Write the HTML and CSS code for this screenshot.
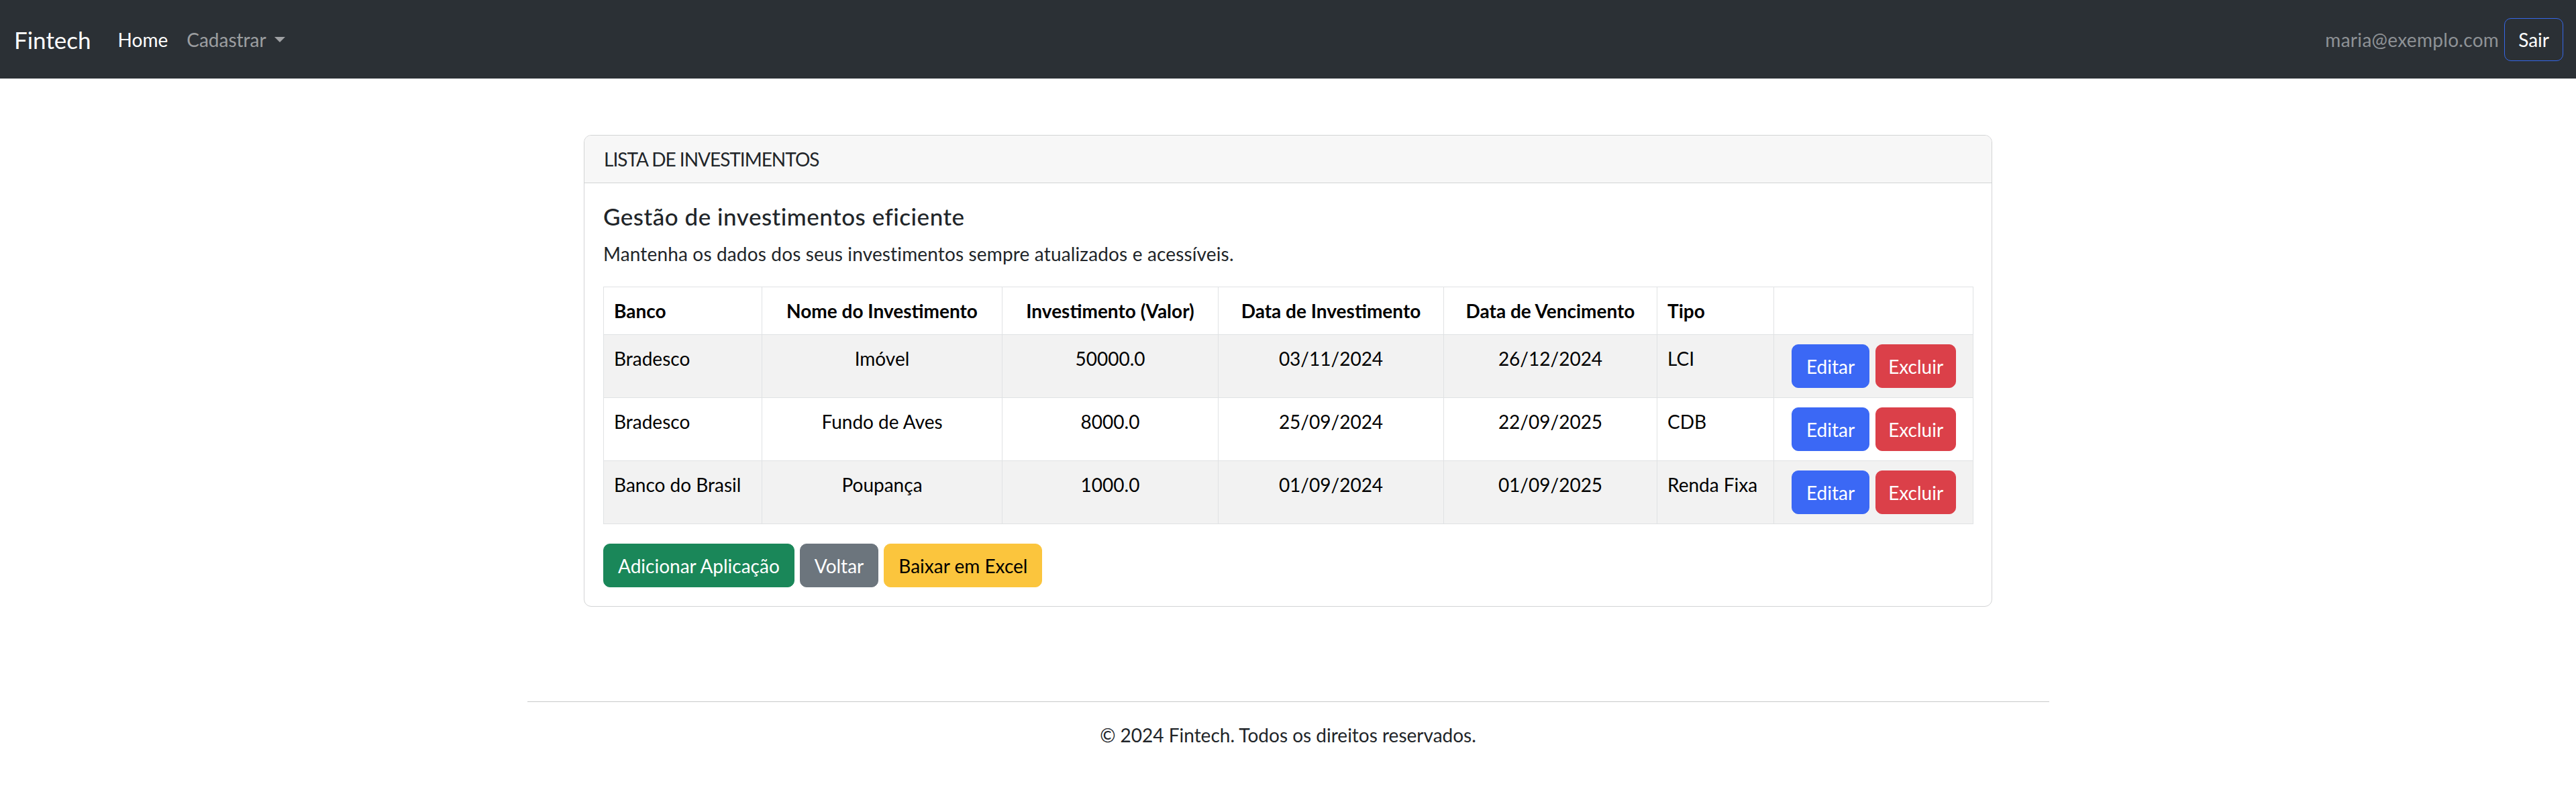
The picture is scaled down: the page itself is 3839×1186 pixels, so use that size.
FILE: index.html
```html
<!DOCTYPE html>
<html lang="pt-BR">
<head>
<meta charset="utf-8">
<title>Fintech - Lista de Investimentos</title>
<link rel="stylesheet" href="styles.css">
</head>
<body>
<nav class="navbar">
  <a class="brand" href="#">Fintech</a>
  <ul class="nav">
    <li><a class="nav-link active" href="#">Home</a></li>
    <li><a class="nav-link dropdown" href="#">Cadastrar<span class="caret"></span></a></li>
  </ul>
  <div class="nav-right">
    <span class="user">maria@exemplo.com</span>
    <button class="btn btn-outline">Sair</button>
  </div>
</nav>

<main class="card">
  <div class="card-header">LISTA DE INVESTIMENTOS</div>
  <div class="card-body">
    <h5 class="card-title">Gestão de investimentos eficiente</h5>
    <p class="card-text">Mantenha os dados dos seus investimentos sempre atualizados e acessíveis.</p>
    <table class="table">
      <colgroup>
        <col class="c1"><col class="c2"><col class="c3"><col class="c4"><col class="c5"><col class="c6"><col class="c7">
      </colgroup>
      <thead>
        <tr>
          <th>Banco</th>
          <th class="center">Nome do Investimento</th>
          <th class="center">Investimento (Valor)</th>
          <th class="center">Data de Investimento</th>
          <th class="center">Data de Vencimento</th>
          <th>Tipo</th>
          <th></th>
        </tr>
      </thead>
      <tbody>
        <tr class="striped">
          <td>Bradesco</td>
          <td class="center">Imóvel</td>
          <td class="center">50000.0</td>
          <td class="center">03/11/2024</td>
          <td class="center">26/12/2024</td>
          <td>LCI</td>
          <td><div class="actions"><button class="btn btn-primary">Editar</button><button class="btn btn-danger">Excluir</button></div></td>
        </tr>
        <tr>
          <td>Bradesco</td>
          <td class="center">Fundo de Aves</td>
          <td class="center">8000.0</td>
          <td class="center">25/09/2024</td>
          <td class="center">22/09/2025</td>
          <td>CDB</td>
          <td><div class="actions"><button class="btn btn-primary">Editar</button><button class="btn btn-danger">Excluir</button></div></td>
        </tr>
        <tr class="striped">
          <td>Banco do Brasil</td>
          <td class="center">Poupança</td>
          <td class="center">1000.0</td>
          <td class="center">01/09/2024</td>
          <td class="center">01/09/2025</td>
          <td>Renda Fixa</td>
          <td><div class="actions"><button class="btn btn-primary">Editar</button><button class="btn btn-danger">Excluir</button></div></td>
        </tr>
      </tbody>
    </table>
    <div class="toolbar">
      <button class="btn btn-success">Adicionar Aplicação</button>
      <button class="btn btn-secondary">Voltar</button>
      <button class="btn btn-warning">Baixar em Excel</button>
    </div>
  </div>
</main>

<footer class="footer">
  <hr class="rule">
  <p class="copy">© 2024 Fintech. Todos os direitos reservados.</p>
</footer>
</body>
</html>
```

FILE: styles.css
```css
* { box-sizing: border-box; }

html, body {
  margin: 0;
  padding: 0;
  background: #ffffff;
  color: #212529;
  font-family: Lato, "Open Sans", "Noto Sans", sans-serif;
  font-size: 28px;
  line-height: 42px;
}

a { text-decoration: none; }

/* Navbar */
.navbar {
  height: 117px;
  background: #2b3035;
  display: flex;
  align-items: center;
  padding: 0 19px 0 21px;
}

.brand {
  color: #ffffff;
  font-size: 35px;
  line-height: 52px;
  margin-right: 26px;
}

.nav {
  list-style: none;
  margin: 0;
  padding: 0;
  display: flex;
}

.nav-link {
  display: block;
  padding: 0 14px;
  color: rgba(255, 255, 255, 0.55);
  font-size: 28px;
  line-height: 42px;
}

.nav-link.active { color: #ffffff; }

.caret {
  display: inline-block;
  margin-left: 12px;
  vertical-align: 7px;
  border-top: 8px solid rgba(255, 255, 255, 0.55);
  border-left: 8px solid transparent;
  border-right: 8px solid transparent;
}

.nav-right {
  margin-left: auto;
  display: flex;
  align-items: center;
  gap: 8px;
}

.user {
  color: #8e9296;
  font-size: 28px;
  letter-spacing: 0.3px;
}

/* Buttons */
.btn {
  font-family: inherit;
  font-size: 28px;
  line-height: 42px;
  padding: 10px 21px;
  border: 1px solid transparent;
  border-radius: 10px;
  color: #ffffff;
  cursor: pointer;
}

.btn-outline {
  background: transparent;
  border-color: #3566e6;
  color: #ffffff;
  height: 64px;
  padding: 0 20px;
}

.btn-primary { background: #3b68f5; border-color: #3b68f5; }
.btn-danger { background: #db4049; border-color: #db4049; }
.btn-success { background: #1a8759; border-color: #1a8759; }
.btn-secondary { background: #6c757d; border-color: #6c757d; }
.btn-warning { background: #fbc53d; border-color: #fbc53d; color: #000000; }

/* Card */
.card {
  width: 2099px;
  margin: 84px auto 0;
  border: 1px solid #d3d4d5;
  border-radius: 11px;
  overflow: hidden;
}

.card-header {
  background: #f7f7f7;
  border-bottom: 1px solid #d3d4d5;
  padding: 14px 29px;
  line-height: 42px;
  color: #212529;
  letter-spacing: -1px;
}

.card-body {
  padding: 28px;
}

.card-title {
  margin: 0 0 14px;
  font-size: 35px;
  line-height: 42px;
  font-weight: 500;
  letter-spacing: 0.5px;
  color: #212529;
}

.card-text {
  margin: 0 0 28px;
  letter-spacing: 0.15px;
}

/* Table */
.table {
  width: 100%;
  table-layout: fixed;
  border-collapse: collapse;
  margin: 0 0 29px;
  color: #000000;
  vertical-align: top;
}

.c1 { width: 236px; }
.c2 { width: 358px; }
.c3 { width: 322px; }
.c4 { width: 336px; }
.c5 { width: 318px; }
.c6 { width: 174px; }
.c7 { width: 297px; }

.table th,
.table td {
  border: 1px solid #e0e2e4;
  padding: 14px 15px;
  text-align: left;
  vertical-align: top;
  line-height: 42px;
  white-space: nowrap;
}

.table th { font-weight: 700; }

.table .center { text-align: center; }

.table tr.striped td { background: #f2f2f2; }

.actions {
  display: flex;
  gap: 9px;
  padding-left: 11px;
}

.actions .btn {
  height: 65px;
}

.actions .btn-danger {
  padding: 10px 18px;
}

/* Toolbar */
.toolbar {
  display: flex;
  gap: 8px;
}

.toolbar .btn { height: 65px; }

/* Footer */
.footer {
  width: 2268px;
  margin: 141px auto 0;
  text-align: center;
}

.rule {
  margin: 0 0 28px;
  border: 0;
  border-top: 1px solid #c8c9ca;
}

.copy {
  margin: 0;
  color: #212529;
}
```
